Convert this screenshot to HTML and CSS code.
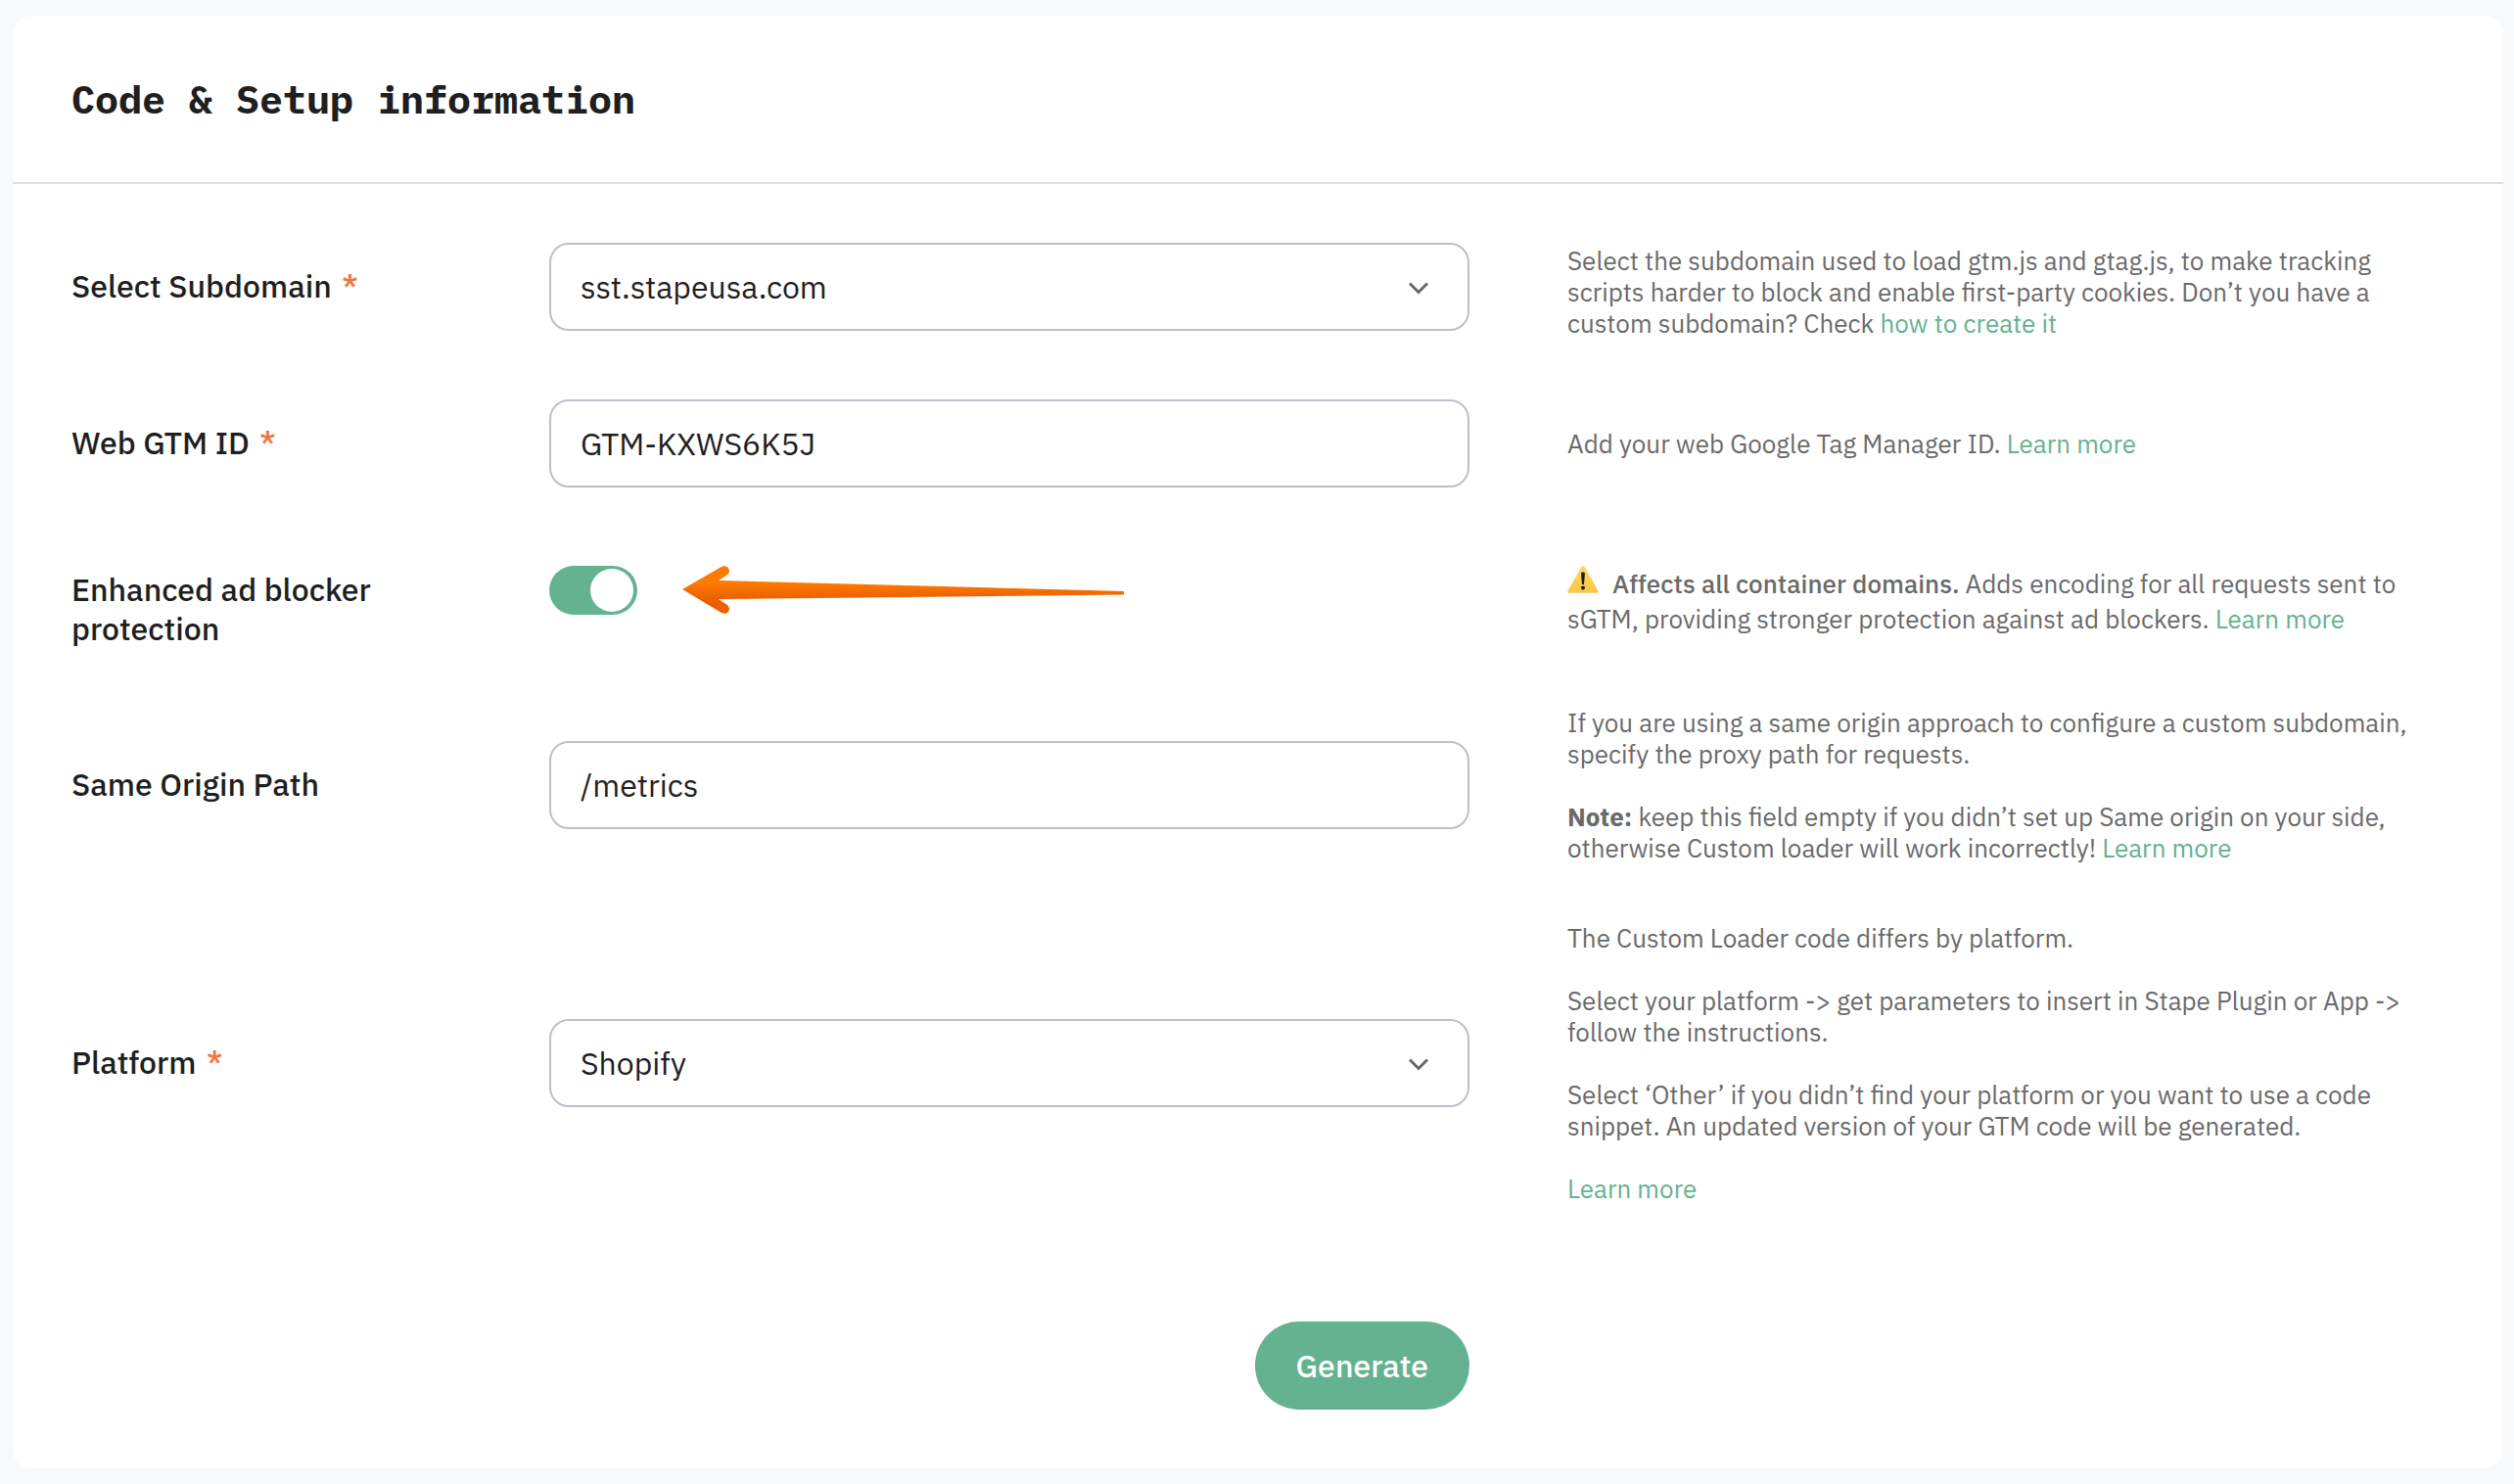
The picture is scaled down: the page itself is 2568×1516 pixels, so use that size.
FILE: index.html
```html
<!DOCTYPE html>
<html lang="en">
<head>
  <meta charset="UTF-8">
  <title>Code &amp; Setup information</title>
  <link rel="stylesheet" href="styles.css">
</head>
<body>
  <main class="card">
    <header class="card-header">
      <h1>Code &amp; Setup information</h1>
    </header>

    <form class="form">
      <div class="row row-tall">
        <label class="label" for="subdomain">Select Subdomain <span class="required">*</span></label>
        <div class="control select">
          <select class="input" id="subdomain">
            <option>sst.stapeusa.com</option>
          </select>
          <svg class="chevron" viewBox="0 0 24 24"><path d="M3 7.500L12 16.500L21 7.500"/></svg>
        </div>
        <div class="help">
          <p>Select the subdomain used to load gtm.js and gtag.js, to make tracking scripts harder to block and enable first-party cookies. Don’t you have a custom subdomain? Check <a href="#">how to create it</a></p>
        </div>
      </div>

      <div class="row">
        <label class="label" for="gtm-id">Web GTM ID <span class="required">*</span></label>
        <div class="control">
          <input class="input" id="gtm-id" type="text" value="GTM-KXWS6K5J">
        </div>
        <div class="help">
          <p>Add your web Google Tag Manager ID. <a href="#">Learn more</a></p>
        </div>
      </div>

      <div class="row row-toggle">
        <label class="label" for="protection">Enhanced ad blocker protection</label>
        <div class="control toggle-line">
          <input class="toggle" id="protection" type="checkbox" checked>
          <svg class="arrow" viewBox="0 0 452 50">
            <defs>
              <linearGradient id="arrow-fill" x1="0" y1="0" x2="0" y2="1">
                <stop offset="0.350" stop-color="#ff7a00"/>
                <stop offset="0.700" stop-color="#ea6000"/>
              </linearGradient>
            </defs>
            <path fill="url(#arrow-fill)" d="M0 24L40 1C44 -1 48 2 48 5C48 7 47 8 46 9L37 15L451 26V29.500L37 34L46 40C47 41 48 43 48 44C48 48 44 50 40 48Z"/>
          </svg>
        </div>
        <div class="help">
          <p><svg class="warning" viewBox="0 0 32 28"><defs><linearGradient id="warning-fill" x1="0" y1="0" x2="0" y2="1"><stop offset="0" stop-color="#fbd95c"/><stop offset="1" stop-color="#f7c744"/></linearGradient></defs><path fill="url(#warning-fill)" d="M14.300 1.300Q16 -1 17.700 1.300L31.500 25.500Q32 28 30 28H2Q0 28 0.500 25.500Z"/><path fill="#f3d48a" d="M0.400 27H31.600Q31.500 28 30 28H2Q0.500 28 0.400 27Z"/><path fill="#1c1c1c" d="M14 7.500Q16 5.500 18 7.500L17 19H15Z"/><circle fill="#1c1c1c" cx="16" cy="22.500" r="2"/></svg><strong class="medium">Affects all container domains.</strong> Adds encoding for all requests sent to sGTM, providing stronger protection against ad blockers. <a href="#">Learn more</a></p>
        </div>
      </div>

      <div class="row row-center">
        <label class="label" for="origin-path">Same Origin Path</label>
        <div class="control">
          <input class="input" id="origin-path" type="text" value="/metrics">
        </div>
        <div class="help">
          <p>If you are using a same origin approach to configure a custom subdomain, specify the proxy path for requests.</p>
          <p><strong>Note:</strong> keep this field empty if you didn’t set up Same origin on your side, otherwise Custom loader will work incorrectly! <a href="#">Learn more</a></p>
        </div>
      </div>

      <div class="row row-center">
        <label class="label" for="platform">Platform <span class="required">*</span></label>
        <div class="control select">
          <select class="input" id="platform">
            <option>Shopify</option>
          </select>
          <svg class="chevron" viewBox="0 0 24 24"><path d="M3 7.500L12 16.500L21 7.500"/></svg>
        </div>
        <div class="help">
          <p>The Custom Loader code differs by platform.</p>
          <p>Select your platform -&gt; get parameters to insert in Stape Plugin or App -&gt; follow the instructions.</p>
          <p>Select ‘Other’ if you didn’t find your platform or you want to use a code snippet. An updated version of your GTM code will be generated.</p>
          <p><a href="#">Learn more</a></p>
        </div>
      </div>

      <div class="row row-actions">
        <div class="control actions">
          <button class="button" type="button">Generate</button>
        </div>
      </div>
    </form>
  </main>
</body>
</html>
```
FILE: styles.css
```css
* {
  box-sizing: border-box;
}

body {
  margin: 0;
  padding: 16px 11px 16px 13px;
  background: #f8f9fb;
  color: #1f1f1f;
  font-family: "IBM Plex Sans", Roboto, sans-serif;
  font-size: 32px;
  line-height: 40px;
}

h1,
p {
  margin: 0;
}

a {
  color: #65b291;
  text-decoration: none;
}

.card {
  background: #fff;
  border-radius: 20px;
}

.card-header {
  padding: 60px;
  border-bottom: 2px solid #dfe0e5;
}

h1 {
  font-family: "IBM Plex Mono", "Liberation Mono", monospace;
  font-size: 40px;
  line-height: 50px;
  font-weight: 700;
}

.form {
  display: flex;
  flex-direction: column;
  gap: 60px;
  padding: 60px;
}

.row {
  display: grid;
  grid-template-columns: 488fr 1040fr 896fr;
  align-items: start;
}

.row-tall {
  min-height: 100px;
}

.label {
  padding: 24px 60px 26px 0;
  font-weight: 500;
}

.required {
  margin-left: 3px;
  color: #f0743e;
}

.control {
  margin-right: 100px;
}

.input {
  display: block;
  width: 100%;
  height: 90px;
  padding: 0 30px;
  border: 2px solid #bac1c8;
  border-radius: 20px;
  background: #fff;
  color: #1f1f1f;
  font: inherit;
  appearance: none;
}

.select {
  position: relative;
}

.chevron {
  position: absolute;
  top: 34px;
  right: 40px;
  width: 24px;
  height: 24px;
  fill: none;
  stroke: #64686d;
  stroke-width: 3;
  pointer-events: none;
}

.help {
  display: flex;
  flex-direction: column;
  gap: 32px;
  align-self: center;
  color: #6a6a6a;
  font-size: 26px;
  line-height: 32px;
}

.medium {
  font-weight: 500;
}

/* toggle */
.row-toggle {
  padding-top: 20px;
}

.row-toggle .label {
  padding-top: 4px;
  padding-bottom: 0;
}

.row-toggle .help {
  align-self: start;
  line-height: 36px;
}

.toggle-line {
  display: flex;
  align-items: center;
  gap: 46px;
}

.toggle {
  width: 90px;
  height: 50px;
  margin: 0;
  padding: 3px 4px;
  border-radius: 25px;
  background: #65b291;
  appearance: none;
}

.toggle::before {
  content: "";
  display: block;
  width: 44px;
  height: 44px;
  border-radius: 50%;
  background: #fff;
}

.toggle:checked::before {
  margin-left: auto;
}

.arrow {
  width: 452px;
  height: 50px;
}

.warning {
  width: 32px;
  height: 28px;
  margin-right: 14px;
}

.row-center {
  align-items: center;
}

/* submit */
.row-actions {
  padding-top: 60px;
}

.actions {
  grid-column: 1 / 3;
  display: flex;
  justify-content: flex-end;
}

.button {
  height: 90px;
  padding: 0 42px;
  border: 0;
  border-radius: 45px;
  background: #65b291;
  color: #fff;
  font: inherit;
  font-weight: 500;
}
```
